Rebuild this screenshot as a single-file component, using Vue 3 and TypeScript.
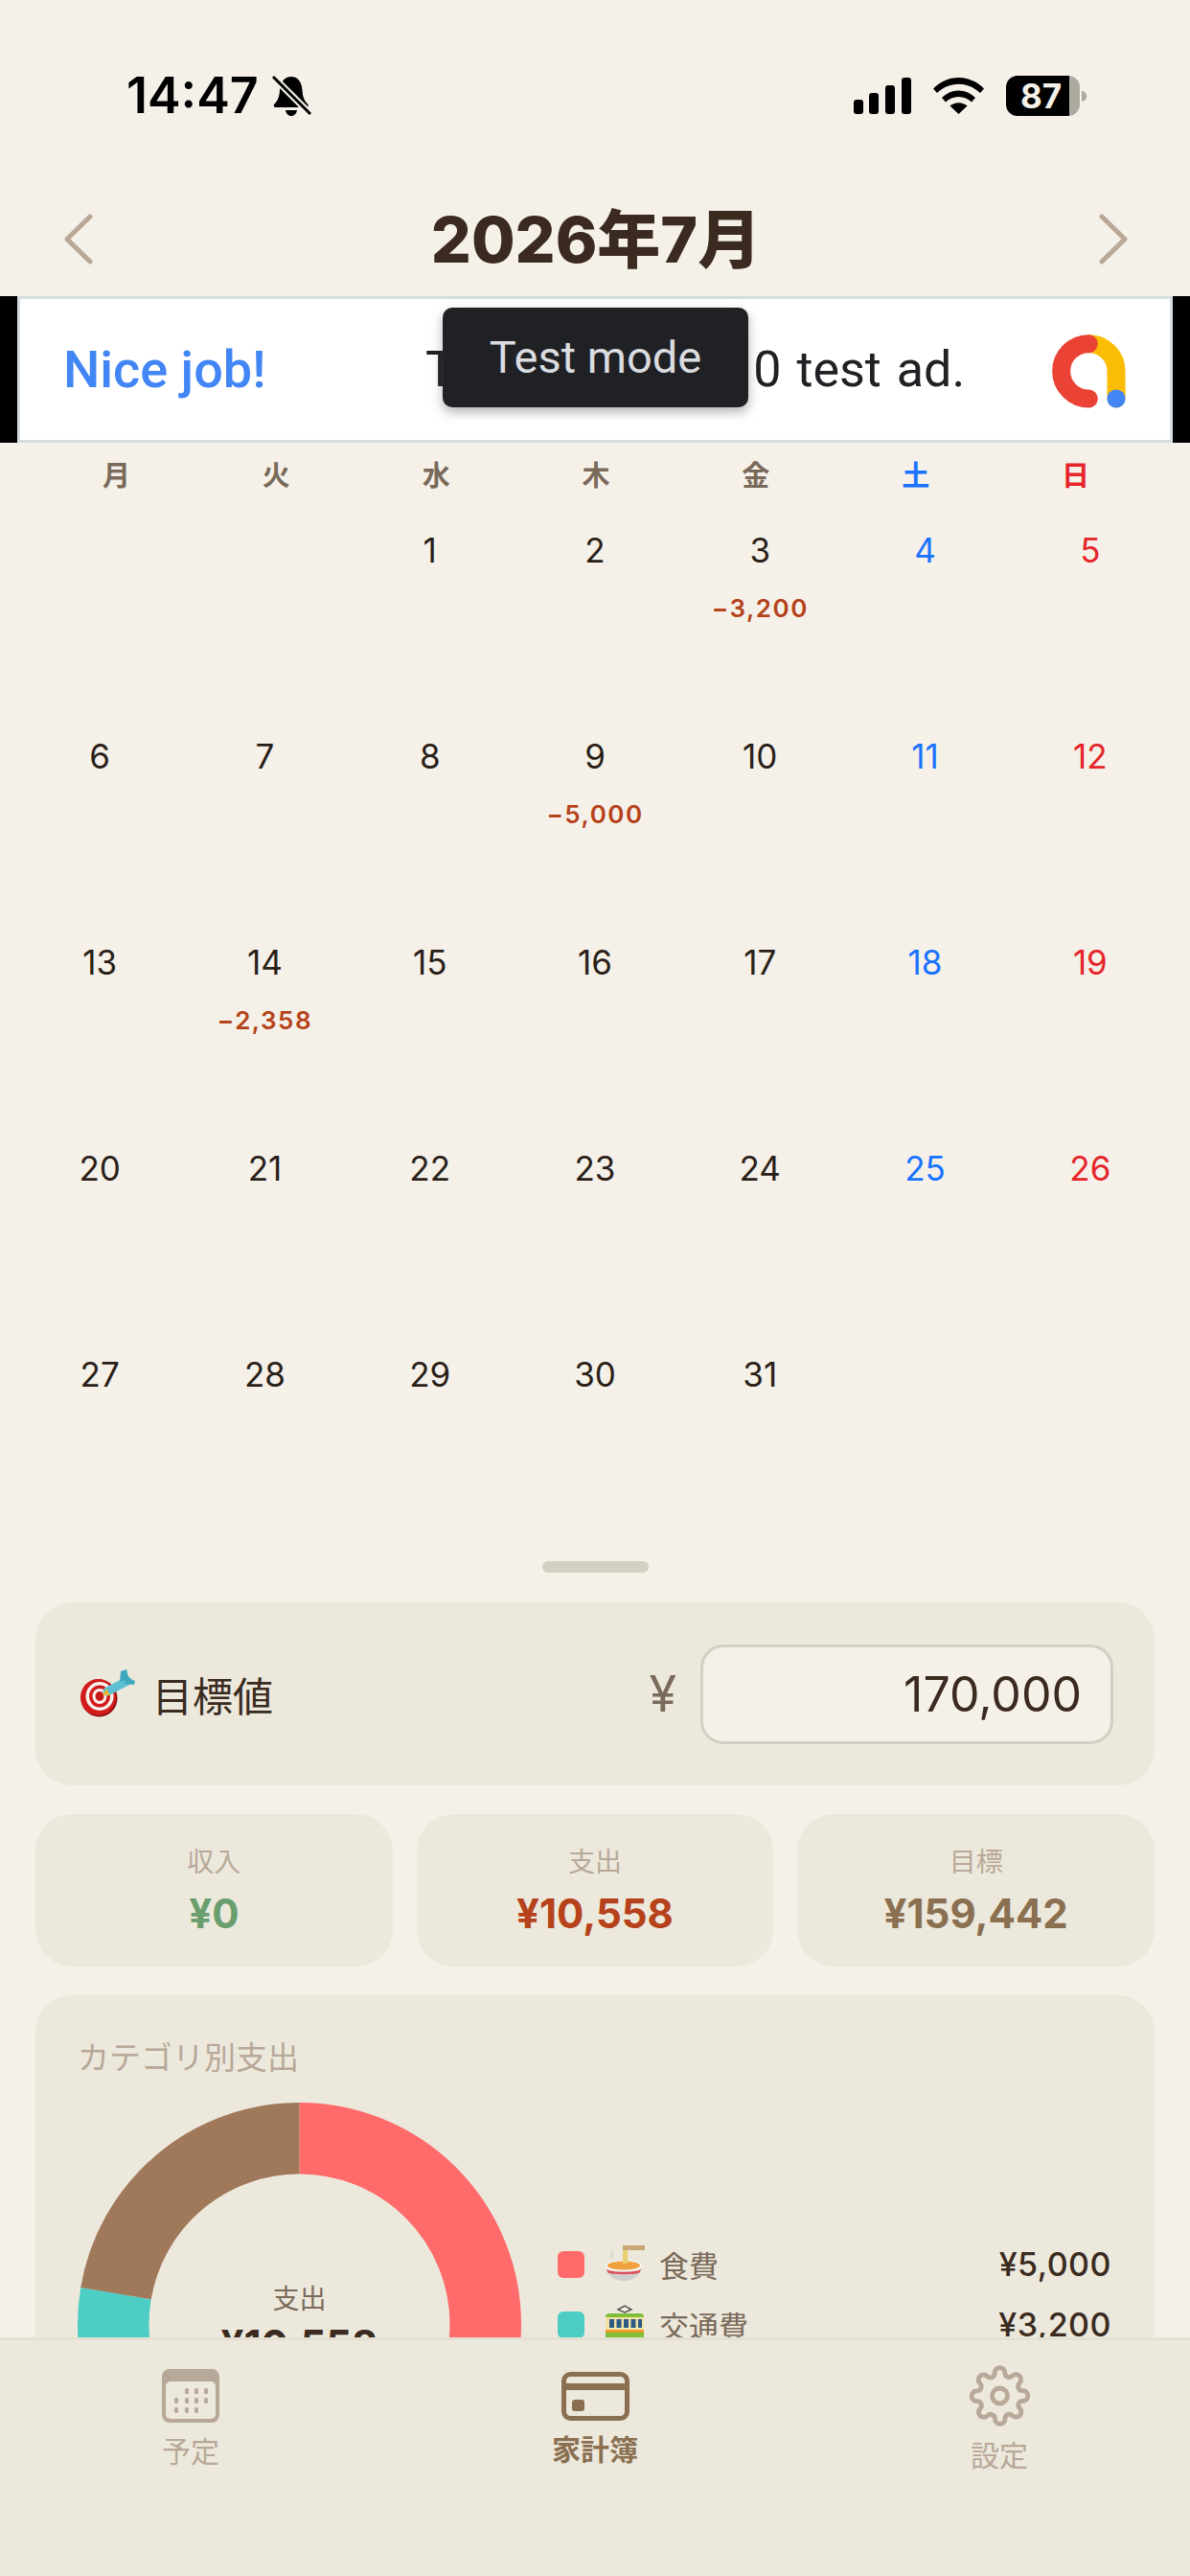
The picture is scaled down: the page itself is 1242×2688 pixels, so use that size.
<template>
  <div class="app">
    <div class="main">
      <!-- status bar -->
      <div class="status">
        <div class="status-left">
          <span class="time">14:47</span>
          <svg class="bell" width="42" height="44" viewBox="0 0 42 44">
            <path d="M21 2c7 0 11 6 11.500 14 .4 7 2 11 5.500 14.500 1.500 1.500 .8 3.500-1.500 3.500H5c-2.300 0-3-2-1.500-3.500C7 27 8.600 23 9 16 9.500 8 14 2 21 2z" fill="#000" />
            <path d="M15 37h12c-.5 3.500-3 6-6 6s-5.500-2.500-6-6z" fill="#000" />
            <path d="M1 1l40 40" stroke="#f5f1e9" stroke-width="7" />
            <path d="M2 2l39 39" stroke="#000" stroke-width="3" />
          </svg>
        </div>
        <div class="status-right">
          <svg width="60" height="38" viewBox="0 0 60 38">
            <rect x="0" y="23" width="10" height="15" rx="3" fill="#000" />
            <rect x="16" y="16" width="10" height="22" rx="3" fill="#000" />
            <rect x="33" y="8" width="10" height="30" rx="3" fill="#000" />
            <rect x="50" y="0" width="10" height="38" rx="3" fill="#000" />
          </svg>
          <svg class="wifi" width="53" height="38" viewBox="0 0 53 38">
            <path d="M0 11.500C7 4.500 16 0 26.500 0S46 4.500 53 11.500l-4 4.500C43 10.500 35.500 6.800 26.500 6.800S10 10.500 4 16z" fill="#000" />
            <path d="M9 21c4.500-4.500 10.500-7.500 17.500-7.500S39.500 16.500 44 21l-4 4.500c-3.500-3.300-8-5.500-13.500-5.500S16.500 22.200 13 25.500z" fill="#000" />
            <path d="M17.500 29.500c2.300-2 5.300-3.300 9-3.300s6.700 1.300 9 3.300L26.500 38z" fill="#000" />
          </svg>
          <div class="battery">
            <div class="battery-body"><span>87</span></div>
            <div class="battery-nub"></div>
          </div>
        </div>
      </div>

      <!-- month header -->
      <div class="month-head">
        <svg width="31" height="53" viewBox="0 0 31 53"><path d="M28 3L4 26.500 28 50" class="chev" /></svg>
        <h1 class="month-title">2026年7月</h1>
        <svg width="31" height="53" viewBox="0 0 31 53"><path d="M3 3l24 23.500L3 50" class="chev" /></svg>
      </div>

      <!-- test ad -->
      <div class="ad">
        <div class="ad-inner">
          <span class="ad-nice">Nice job!</span>
          <span class="ad-text">This is a 320x5<span class="ad-tail">0 test ad.</span></span>
          <svg class="ad-logo" width="77" height="77" viewBox="0 0 77 77">
            <path d="M38.300 9.700A28.600 28.600 0 0 1 67 38.300V67" fill="none" stroke="#fbbc04" stroke-width="19" stroke-linecap="round" />
            <path d="M38.300 9.700A28.600 28.600 0 0 0 38.300 67" fill="none" stroke="#ea4335" stroke-width="19" stroke-linecap="round" />
            <circle cx="67" cy="67" r="9.600" fill="#4285f4" />
          </svg>
          <div class="ad-badge">Test mode</div>
        </div>
      </div>

      <!-- calendar -->
      <div class="weekdays">
        <span v-for="w in weekdays" :key="w.label" :class="['weekday', w.tone]">{{ w.label }}</span>
      </div>
      <div class="days">
        <div v-for="(d, i) in cells" :key="i" class="day">
          <template v-if="d">
            <span :class="['day-num', toneOf(i)]">{{ d }}</span>
            <span v-if="amounts[d]" class="day-amount">{{ amounts[d] }}</span>
          </template>
        </div>
      </div>

      <div class="handle"></div>

      <div class="sheet">
        <div class="card target">
          <div class="target-label">
            <svg class="target-icon" width="58" height="50" viewBox="0 0 58 50">
              <ellipse cx="20.500" cy="30" rx="19" ry="19.500" fill="#8e0d0d" />
              <ellipse cx="19.500" cy="29" rx="18.500" ry="19" fill="#d21c1c" />
              <ellipse cx="21" cy="28" rx="14.500" ry="15" fill="#f7f2ee" />
              <ellipse cx="21" cy="28" rx="11" ry="11.500" fill="#d21c1c" />
              <ellipse cx="21" cy="28" rx="7.500" ry="8" fill="#f7f2ee" />
              <ellipse cx="21" cy="28" rx="4.500" ry="5" fill="#c91818" />
              <path d="M29 23L50 12" stroke="#5cc0d2" stroke-width="9" stroke-linecap="round" />
              <path d="M24 27l4-7 4 7z" fill="#e6b93a" />
              <path d="M42 13l1-11 6-2 3 11zM46 15l5-6 7 3-1 4z" fill="#3fa9c0" />
            </svg>
            <span>目標値</span>
          </div>
          <div class="target-value">
            <span class="yen">¥</span>
            <div class="target-input">170,000</div>
          </div>
        </div>

        <div class="stats">
          <div v-for="s in stats" :key="s.label" class="card stat">
            <span class="stat-label">{{ s.label }}</span>
            <span :class="['stat-value', s.tone]">{{ s.value }}</span>
          </div>
        </div>

        <div class="card breakdown">
          <div class="breakdown-title">カテゴリ別支出</div>
          <div class="breakdown-body">
            <div class="donut">
              <svg width="463" height="463" viewBox="0 0 463 463">
                <circle
                  v-for="seg in segments"
                  :key="seg.color"
                  cx="231.500"
                  cy="231.500"
                  r="194.250"
                  fill="none"
                  :stroke="seg.color"
                  stroke-width="74.500"
                  pathLength="100"
                  :stroke-dasharray="`${seg.size} ${100 - seg.size}`"
                  :stroke-dashoffset="-seg.start"
                  transform="rotate(-90 231.500 231.500)"
                />
              </svg>
              <div class="donut-center">
                <span class="donut-label">支出</span>
                <span class="donut-value">¥10,558</span>
              </div>
            </div>
            <div class="legend">
              <div v-for="c in categories" :key="c.name" class="legend-row">
                <span class="swatch" :style="{ background: c.color }"></span>
                <svg v-if="c.icon === 'ramen'" class="legend-icon" width="42" height="42" viewBox="0 0 42 42">
                  <path d="M8 14c-2-3 1-5 0-8" fill="none" stroke="#ddd8d0" stroke-width="2.500" />
                  <path d="M1 22c0 9 8 16 19 16s19-7 19-16z" fill="#cfcfcf" />
                  <path d="M1 22c0 6 8 10 19 10s19-4 19-10z" fill="#f6f4f0" />
                  <ellipse cx="20" cy="22" rx="19" ry="6" fill="#f6f4f0" />
                  <ellipse cx="20" cy="22" rx="17" ry="4.500" fill="#f0a23e" />
                  <path d="M2 26c6 3.500 30 3.500 36 0l-1.500 3.500c-7 2.500-26 2.500-33 0z" fill="#d9525a" />
                  <rect x="19" y="4" width="5" height="16" fill="#e9cf6f" />
                  <rect x="19" y="1" width="23" height="5" fill="#c9a877" />
                </svg>
                <svg v-else-if="c.icon === 'tram'" class="legend-icon" width="42" height="42" viewBox="0 0 42 42">
                  <path d="M14 5l7-4 7 4-7 3z" fill="#f4efe6" stroke="#555" stroke-width="1.500" />
                  <rect x="1" y="9" width="40" height="33" rx="4" fill="#f3e3a6" />
                  <path d="M1 13a4 4 0 0 1 4-4h32a4 4 0 0 1 4 4z" fill="#7fbf3a" />
                  <rect x="5" y="15" width="5" height="9" fill="#2d5b86" />
                  <rect x="12.500" y="15" width="5" height="9" fill="#2d5b86" />
                  <rect x="20" y="15" width="5" height="9" fill="#2d5b86" />
                  <rect x="27.500" y="15" width="5" height="9" fill="#2d5b86" />
                  <rect x="35" y="15" width="4" height="9" fill="#2d5b86" />
                  <rect x="1" y="26" width="40" height="3" fill="#f09a2a" />
                  <rect x="1" y="29" width="40" height="13" fill="#7fbf3a" />
                </svg>
                <svg v-else class="legend-icon" width="42" height="42" viewBox="0 0 42 42">
                  <rect x="6" y="12" width="30" height="26" rx="4" fill="#c79a63" />
                </svg>
                <span class="legend-name">{{ c.name }}</span>
                <span class="legend-amount">{{ c.amount }}</span>
              </div>
            </div>
          </div>
        </div>
      </div>
    </div>

    <!-- tab bar -->
    <div class="tabbar">
      <div class="tab">
        <svg width="60" height="56" viewBox="0 0 60 56">
          <rect width="60" height="56" rx="8" fill="#b8a898" />
          <rect x="4" y="13" width="52" height="39" rx="5" fill="#ece8dc" />
          <g fill="#b8a898">
            <rect v-for="dot in calendarDots" :key="dot[0] + '-' + dot[1]" :x="dot[0]" :y="dot[1]" width="4" height="6" rx="1.500" />
          </g>
        </svg>
        <span class="tab-label">予定</span>
      </div>
      <div class="tab active">
        <svg width="71" height="51" viewBox="0 0 71 51">
          <rect x="2.500" y="2.500" width="66" height="46" rx="7" fill="none" stroke="#8a7050" stroke-width="5" />
          <rect x="3" y="12" width="65" height="7" fill="#8a7050" />
          <rect x="11" y="29" width="13" height="12" rx="3" fill="#8a7050" />
        </svg>
        <span class="tab-label">家計簿</span>
      </div>
      <div class="tab">
        <svg width="65" height="64" viewBox="0 0 24 24" fill="none" stroke="#b8a898" stroke-width="1.800">
          <circle cx="12" cy="12" r="3" />
          <path d="M19.400 15a1.650 1.650 0 0 0 .33 1.820l.06.06a2 2 0 0 1 0 2.830 2 2 0 0 1-2.830 0l-.06-.06a1.650 1.650 0 0 0-1.820-.33 1.650 1.650 0 0 0-1 1.510V21a2 2 0 0 1-2 2 2 2 0 0 1-2-2v-.09A1.650 1.650 0 0 0 9 19.400a1.650 1.650 0 0 0-1.820.33l-.06.06a2 2 0 0 1-2.830 0 2 2 0 0 1 0-2.830l.06-.06a1.650 1.650 0 0 0 .33-1.820 1.650 1.650 0 0 0-1.510-1H3a2 2 0 0 1-2-2 2 2 0 0 1 2-2h.09A1.650 1.650 0 0 0 4.600 9a1.650 1.650 0 0 0-.33-1.820l-.06-.06a2 2 0 0 1 0-2.830 2 2 0 0 1 2.830 0l.06.06a1.650 1.650 0 0 0 1.820.33H9a1.650 1.650 0 0 0 1-1.510V3a2 2 0 0 1 2-2 2 2 0 0 1 2 2v.09a1.650 1.650 0 0 0 1 1.510 1.650 1.650 0 0 0 1.820-.33l.06-.06a2 2 0 0 1 2.830 0 2 2 0 0 1 0 2.830l-.06.06a1.650 1.650 0 0 0-.33 1.820V9a1.650 1.650 0 0 0 1.510 1H21a2 2 0 0 1 2 2 2 2 0 0 1-2 2h-.09a1.650 1.650 0 0 0-1.510 1z" />
        </svg>
        <span class="tab-label">設定</span>
      </div>
    </div>
  </div>
</template>

<script setup lang="ts">
const weekdays = [
  { label: '月', tone: '' },
  { label: '火', tone: '' },
  { label: '水', tone: '' },
  { label: '木', tone: '' },
  { label: '金', tone: '' },
  { label: '土', tone: 'sat' },
  { label: '日', tone: 'sun' },
];

// July 2026 starts on a Wednesday, weeks start on Monday
const cells: (number | null)[] = [null, null, ...Array.from({ length: 31 }, (_, i) => i + 1)];

const amounts: Record<number, string> = {
  3: '−3,200',
  9: '−5,000',
  14: '−2,358',
};

function toneOf(i: number) {
  if (i % 7 === 5) return 'sat';
  if (i % 7 === 6) return 'sun';
  return '';
}

const stats = [
  { label: '収入', value: '¥0', tone: 'income' },
  { label: '支出', value: '¥10,558', tone: 'expense' },
  { label: '目標', value: '¥159,442', tone: 'goal' },
];

const categories = [
  { name: '食費', amount: '¥5,000', value: 5000, color: '#ff6b6b', icon: 'ramen' },
  { name: '交通費', amount: '¥3,200', value: 3200, color: '#4ecdc4', icon: 'tram' },
  { name: 'その他', amount: '¥2,358', value: 2358, color: '#a0785a', icon: 'box' },
];

const total = categories.reduce((sum, c) => sum + c.value, 0);
let running = 0;
const segments = categories.map((c) => {
  const size = (c.value / total) * 100;
  const seg = { color: c.color, size, start: running };
  running += size;
  return seg;
});

const calendarDots: number[][] = [
  [24, 20], [34, 20], [44, 20],
  [13, 30], [24, 30], [34, 30], [44, 30],
  [13, 40], [24, 40], [34, 40],
];
</script>

<style scoped>
.app {
  width: 1242px;
  height: 2688px;
  display: flex;
  flex-direction: column;
  overflow: hidden;
  background: #f5f1e9;
  color: #3a2a20;
  font-family: Inter, "Noto Sans CJK JP", sans-serif;
}

.main {
  flex: 1;
  min-height: 0;
  overflow: hidden;
}

/* status bar */
.status {
  height: 200px;
  display: flex;
  align-items: center;
  justify-content: space-between;
  padding: 0 108px 0 132px;
  box-sizing: border-box;
  color: #000;
}

.status-left,
.status-right {
  display: flex;
  align-items: center;
}

.time {
  font-size: 52px;
  font-weight: 600;
  line-height: 60px;
}

.bell {
  margin-left: 13px;
}

.wifi {
  margin-left: 23px;
}

.battery {
  display: flex;
  align-items: center;
  margin-left: 23px;
}

.battery-body {
  width: 77px;
  height: 42px;
  border-radius: 12px;
  background: linear-gradient(to right, #000 0, #000 66px, #aeaaa0 66px);
  color: #f5f1e9;
  font-size: 35px;
  font-weight: 700;
  line-height: 42px;
  box-sizing: border-box;
  padding-left: 15px;
}

.battery-nub {
  width: 5px;
  height: 11px;
  margin-left: 2px;
  background: #aeaaa0;
  border-radius: 0 5px 5px 0;
}

/* month header */
.month-head {
  height: 109px;
  display: flex;
  align-items: center;
  justify-content: space-between;
  padding: 0 64px 10px 66px;
  box-sizing: border-box;
}

.month-title {
  margin: 0;
  font-size: 66px;
  font-weight: 800;
  line-height: 80px;
  color: #3a2a20;
}

.chev {
  fill: none;
  stroke: #b8a898;
  stroke-width: 5;
  stroke-linecap: round;
  stroke-linejoin: round;
}

/* ad */
.ad {
  height: 153px;
  background: #000;
  padding: 0 18px;
}

.ad-inner {
  position: relative;
  height: 100%;
  box-sizing: border-box;
  background: #fff;
  border: 3px solid #d5dde0;
  display: flex;
  align-items: center;
  font-family: Roboto, sans-serif;
  font-size: 52px;
  color: #202124;
}

.ad-nice {
  width: 423px;
  padding-left: 45px;
  box-sizing: border-box;
  font-size: 54px;
  color: #4285f4;
  font-weight: 500;
}

.ad-text {
  white-space: nowrap;
  letter-spacing: -1px;
}

/* the part that shows to the right of the badge */
.ad-tail {
  margin-left: 9px;
  letter-spacing: 0;
  word-spacing: 3px;
}

.ad-logo {
  margin-left: auto;
  margin-right: 46px;
  margin-top: 4px;
}

.ad-badge {
  position: absolute;
  left: 441px;
  top: 9px;
  width: 319px;
  height: 104px;
  border-radius: 10px;
  background: #202124;
  color: #dadce0;
  font-size: 47px;
  line-height: 104px;
  text-align: center;
  box-shadow: 0 5px 12px rgba(60, 64, 67, 0.4);
}

/* calendar */
.weekdays {
  height: 66px;
  padding: 0 36px 2px 38px;
  box-sizing: border-box;
  display: grid;
  grid-template-columns: repeat(7, 1fr);
  align-items: center;
  justify-items: center;
}

.weekday {
  font-size: 29px;
  font-weight: 600;
  color: #7a6a5a;
}

.days {
  padding: 0 18px;
  display: grid;
  grid-template-columns: repeat(7, 1fr);
  grid-auto-rows: 215px;
}

.day {
  display: flex;
  flex-direction: column;
  align-items: center;
  padding-top: 24px;
  box-sizing: border-box;
}

.day-num {
  font-size: 35px;
  line-height: 44px;
  color: #2a1f18;
}

.sat {
  color: #1a73ff;
}

.sun {
  color: #e5252a;
}

.day-amount {
  margin-top: 23px;
  font-size: 26px;
  line-height: 32px;
  font-weight: 600;
  letter-spacing: 1.500px;
  color: #b5421a;
}

.handle {
  width: 111px;
  height: 12px;
  margin: 26px auto 31px;
  border-radius: 6px;
  background: #d3cfc2;
}

/* bottom sheet */
.sheet {
  padding: 0 37px;
  display: flex;
  flex-direction: column;
  gap: 30px;
}

.card {
  background: #ece8dc;
  border-radius: 38px;
}

.target {
  height: 191px;
  display: flex;
  align-items: center;
  justify-content: space-between;
  padding: 0 43px 0 46px;
}

.target-label {
  display: flex;
  align-items: center;
  gap: 18px;
  font-size: 42px;
  color: #3a2a20;
}

.target-icon {
  margin-top: -2px;
}

.target-value {
  display: flex;
  align-items: center;
  gap: 25px;
}

.yen {
  font-size: 52px;
  color: #7a6a5a;
}

.target-input {
  width: 431px;
  height: 104px;
  box-sizing: border-box;
  border: 3px solid #d3cfc2;
  border-radius: 24px;
  background: #f5f1e9;
  padding-right: 30px;
  text-align: right;
  font-size: 50px;
  line-height: 98px;
  color: #3a2a20;
}

.stats {
  display: grid;
  grid-template-columns: repeat(3, 1fr);
  gap: 25px;
}

.stat {
  height: 159px;
  display: flex;
  flex-direction: column;
  align-items: center;
  padding-top: 28px;
  box-sizing: border-box;
}

.stat-label {
  font-size: 28px;
  line-height: 44px;
  color: #b8a898;
}

.stat-value {
  margin-top: 8px;
  font-size: 42px;
  line-height: 48px;
  font-weight: 700;
}

.income {
  color: #6a9e6e;
}

.expense {
  color: #b5421a;
}

.goal {
  color: #8a7050;
}

.breakdown {
  padding: 44px 45px 44px 44px;
}

.breakdown-title {
  font-size: 33px;
  line-height: 42px;
  color: #b8a898;
  margin-bottom: 26px;
}

.breakdown-body {
  display: flex;
  align-items: center;
  gap: 38px;
}

.donut {
  position: relative;
  width: 463px;
  height: 463px;
  flex: none;
}

.donut svg {
  display: block;
}

.donut-center {
  position: absolute;
  inset: 0;
  padding-top: 183px;
  box-sizing: border-box;
  display: flex;
  flex-direction: column;
  align-items: center;
}

.donut-label {
  font-size: 28px;
  line-height: 44px;
  color: #7a6a5a;
}

.donut-value {
  font-size: 42px;
  line-height: 52px;
  font-weight: 700;
  color: #3a2a20;
}

.legend {
  flex: 1;
  display: flex;
  flex-direction: column;
  gap: 15px;
}

.legend-row {
  height: 48px;
  display: flex;
  align-items: center;
}

.swatch {
  width: 28px;
  height: 28px;
  border-radius: 6px;
  margin-right: 21px;
}

.legend-icon {
  margin-right: 15px;
  flex: none;
}

.legend-name {
  font-size: 31px;
  color: #7a6a5a;
}

.legend-amount {
  margin-left: auto;
  font-size: 34px;
  font-weight: 500;
  letter-spacing: 0.5px;
  color: #3a2a20;
}

/* tab bar */
.tabbar {
  flex: none;
  height: 249px;
  box-sizing: border-box;
  border-top: 3px solid #e5e1d2;
  background: #ece8dc;
  padding-bottom: 80px;
  display: grid;
  grid-template-columns: repeat(3, 422px);
  justify-content: center;
  align-items: center;
}

.tab {
  display: flex;
  flex-direction: column;
  align-items: center;
  gap: 10px;
}

.tab-label {
  font-size: 30px;
  line-height: 40px;
  color: #b8a898;
}

.tab.active .tab-label {
  font-weight: 700;
  color: #8a7050;
}
</style>

<style>
html,
body {
  background: #f5f1e9;
}
</style>
